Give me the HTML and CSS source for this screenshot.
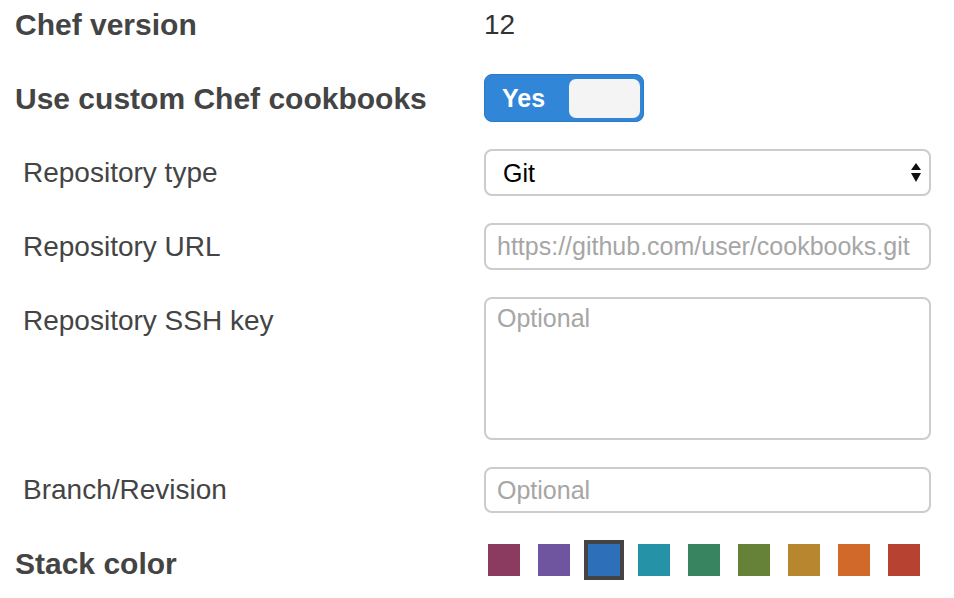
FILE: index.html
```html
<!DOCTYPE html>
<html>
<head>
<meta charset="utf-8">
<link rel="stylesheet" href="styles.css">
</head>
<body>
<div class="form">
  <div class="row row-first">
    <div class="label label-main">Chef version</div>
    <div class="value">12</div>
  </div>
  <div class="row row-toggle">
    <div class="label label-main">Use custom Chef cookbooks</div>
    <div class="control">
      <div class="toggle"><span class="toggle-text">Yes</span><span class="toggle-knob"></span></div>
    </div>
  </div>
  <div class="row">
    <div class="label label-sub">Repository type</div>
    <div class="control">
      <div class="select-wrap">
        <select class="field select"><option>Git</option></select>
        <svg class="select-arrows" width="10" height="20" viewBox="0 0 10 20"><path d="M5 0 L10 7 L0 7 Z M0 10 L10 10 L5 19 Z" fill="#111"/></svg>
      </div>
    </div>
  </div>
  <div class="row">
    <div class="label label-sub">Repository URL</div>
    <div class="control"><input class="field" type="text" placeholder="https://github.com/user/cookbooks.git"></div>
  </div>
  <div class="row">
    <div class="label label-sub">Repository SSH key</div>
    <div class="control"><textarea class="field textarea" placeholder="Optional"></textarea></div>
  </div>
  <div class="row row-branch">
    <div class="label label-sub">Branch/Revision</div>
    <div class="control"><input class="field field-short" type="text" placeholder="Optional"></div>
  </div>
  <div class="row">
    <div class="label label-main">Stack color</div>
    <div class="control">
      <div class="swatches">
        <span class="swatch c1"></span>
        <span class="swatch c2"></span>
        <span class="swatch c3 selected"></span>
        <span class="swatch c4"></span>
        <span class="swatch c5"></span>
        <span class="swatch c6"></span>
        <span class="swatch c7"></span>
        <span class="swatch c8"></span>
        <span class="swatch c9"></span>
      </div>
    </div>
  </div>
</div>
</body>
</html>
```

FILE: styles.css
```css
html, body {
  margin: 0;
  padding: 0;
  background: #ffffff;
}

body {
  font-family: "Liberation Sans", Arial, Helvetica, sans-serif;
  color: #444444;
}

.form {
  display: flex;
  flex-direction: column;
  gap: 27px;
  padding-top: 2px;
  width: 954px;
}

.row {
  display: grid;
  grid-template-columns: 484px 447px;
  align-items: start;
}

.label {
  white-space: nowrap;
}

.label-main {
  padding-left: 15px;
  font-size: 30px;
  font-weight: bold;
  line-height: 47px;
  color: #444444;
}

.label-sub {
  padding-left: 23px;
  font-size: 28px;
  line-height: 47px;
  color: #444444;
}

.row-first .label-main {
  line-height: 45px;
}

.value {
  font-size: 28px;
  line-height: 45px;
  color: #333333;
}

.row-toggle .label-main {
  line-height: 48px;
  padding-top: 1px;
  margin-bottom: -1px;
}

.toggle {
  box-sizing: border-box;
  width: 160px;
  height: 48px;
  border-radius: 8px;
  background: #3286d8;
  border: 1px solid #2c79c8;
  display: flex;
  align-items: center;
  justify-content: space-between;
  padding: 0 3px 0 17px;
}

.toggle-text {
  color: #ffffff;
  font-weight: bold;
  font-size: 25px;
  line-height: 1;
}

.toggle-knob {
  width: 71px;
  height: 39px;
  border-radius: 7px;
  background: #f4f4f4;
}

.field {
  box-sizing: border-box;
  display: block;
  width: 447px;
  height: 47px;
  margin: 0;
  border: 2px solid #cccccc;
  border-radius: 8px;
  background: #ffffff;
  padding: 0 11px;
  font-family: "Liberation Sans", Arial, Helvetica, sans-serif;
  font-size: 25px;
  color: #111111;
  outline: none;
}

.field::placeholder {
  color: #a6a6a6;
  opacity: 1;
}

.field-short {
  height: 46px;
}

.row-branch .label-sub {
  line-height: 46px;
}

.select-wrap {
  position: relative;
  width: 447px;
}

.select {
  appearance: none;
  -webkit-appearance: none;
  padding-left: 17px;
  color: #000000;
}

.select-arrows {
  position: absolute;
  right: 10px;
  top: 14px;
  pointer-events: none;
}

.textarea {
  height: 143px;
  resize: none;
  padding-top: 4px;
  line-height: 30px;
}

.swatches {
  display: flex;
  gap: 18px;
  padding: 4px 0 0 4px;
}

.swatch {
  display: block;
  width: 32px;
  height: 32px;
}

.swatch.selected {
  outline: 4px solid #444444;
}

.c1 { background: #8a3b5f; }
.c2 { background: #6f55a0; }
.c3 { background: #2d6fb8; }
.c4 { background: #2592a8; }
.c5 { background: #388460; }
.c6 { background: #668239; }
.c7 { background: #b8862e; }
.c8 { background: #d1692a; }
.c9 { background: #b84232; }
```
